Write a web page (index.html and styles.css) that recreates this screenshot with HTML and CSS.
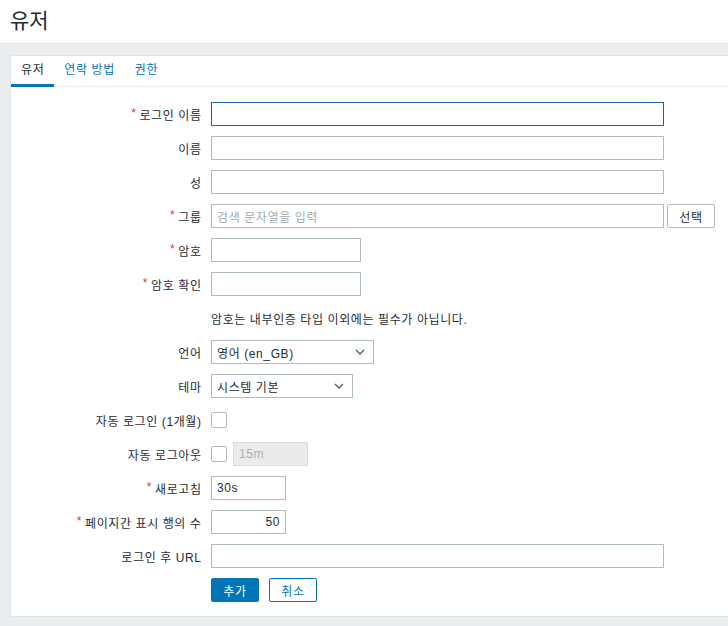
FILE: index.html
```html
<!DOCTYPE html>
<html lang="ko">
<head>
<meta charset="utf-8">
<title>유저</title>
<link rel="stylesheet" href="styles.css">
</head>
<body>
<header class="page-header">
  <h1 class="page-title">유저</h1>
</header>
<main class="wrapper">
  <div class="card">
    <ul class="tabs">
      <li class="tab active">유저</li>
      <li class="tab">연락 방법</li>
      <li class="tab">권한</li>
    </ul>
    <form class="form">
      <label class="label req">로그인 이름</label>
      <div class="field"><input class="input wide focus" type="text"></div>

      <label class="label">이름</label>
      <div class="field"><input class="input wide" type="text"></div>

      <label class="label">성</label>
      <div class="field"><input class="input wide" type="text"></div>

      <label class="label req">그룹</label>
      <div class="field">
        <div class="input wide multiselect"><span class="placeholder">검색 문자열을 입력</span></div>
        <button type="button" class="btn btn-grey">선택</button>
      </div>

      <label class="label req">암호</label>
      <div class="field"><input class="input small" type="password"></div>

      <label class="label req">암호 확인</label>
      <div class="field"><input class="input small" type="password"></div>

      <span class="label"></span>
      <div class="field hint">암호는 내부인증 타입 이외에는 필수가 아닙니다.</div>

      <label class="label">언어</label>
      <div class="field">
        <div class="select lang"><span>영어 (en_GB)</span>
          <svg class="chev" width="10" height="6" viewBox="0 0 10 6"><path d="M1 1 L5 5 L9 1" fill="none" stroke="#4f5b62" stroke-width="1.3"/></svg>
        </div>
      </div>

      <label class="label">테마</label>
      <div class="field">
        <div class="select theme"><span>시스템 기본</span>
          <svg class="chev" width="10" height="6" viewBox="0 0 10 6"><path d="M1 1 L5 5 L9 1" fill="none" stroke="#4f5b62" stroke-width="1.3"/></svg>
        </div>
      </div>

      <label class="label">자동 로그인 (1개월)</label>
      <div class="field"><span class="checkbox"></span></div>

      <label class="label">자동 로그아웃</label>
      <div class="field gap6"><span class="checkbox"></span><input class="input tiny disabled" type="text" value="15m" disabled></div>

      <label class="label req">새로고침</label>
      <div class="field"><input class="input tiny" type="text" value="30s"></div>

      <label class="label req">페이지간 표시 행의 수</label>
      <div class="field"><input class="input tiny right" type="text" value="50"></div>

      <label class="label">로그인 후 URL</label>
      <div class="field"><input class="input wide" type="text"></div>

      <span class="label"></span>
      <div class="field gap10">
        <button type="button" class="btn btn-primary">추가</button>
        <button type="button" class="btn btn-alt">취소</button>
      </div>
    </form>
  </div>
</main>
</body>
</html>
```

FILE: styles.css
```css
* { box-sizing: border-box; }
html, body { margin: 0; padding: 0; }
body {
  background: #ebeef0;
  font-family: "Liberation Sans", Arial, "Noto Sans CJK KR", sans-serif;
  font-size: 12px;
  letter-spacing: 0.6px;
  color: #1f2c33;
  width: 728px;
  height: 626px;
  overflow: hidden;
}
.page-header {
  background: #ffffff;
  height: 44px;
  border-bottom: 1px solid #dfe4e7;
  padding: 0 10px;
  display: flex;
  align-items: center;
}
.page-title {
  margin: 0;
  font-size: 21px;
  font-weight: normal;
  line-height: 24px;
  letter-spacing: 0;
  color: #1f2c33;
  position: relative;
  top: -1px;
}
.wrapper {
  padding: 11px 0 0 10px;
}
.card {
  background: #ffffff;
  border: 1px solid #dfe4e7;
  border-right: none;
  height: 562px;
}
.tabs {
  list-style: none;
  margin: 0;
  padding: 0;
  display: flex;
  height: 31px;
  border-bottom: 1px solid #ebeef0;
}
.tab {
  padding: 0 10px;
  line-height: 29px;
  color: #0275b8;
  border-bottom: 3px solid transparent;
  height: 31px;
  margin-bottom: -1px;
}
.tab.active {
  color: #1f2c33;
  border-bottom-color: #0275b8;
}
.form {
  display: grid;
  grid-template-columns: 190px 1fr;
  column-gap: 10px;
  row-gap: 10px;
  grid-auto-rows: 24px;
  padding-top: 15px;
}
.label {
  display: flex;
  align-items: center;
  justify-content: flex-end;
  white-space: nowrap;
  margin-right: -0.6px;
}
.label.req::before {
  content: "*";
  color: #e0324a;
  margin-right: 3px;
  position: relative;
  top: -1px;
}
.field {
  display: flex;
  align-items: center;
}
.gap6 { gap: 6px; }
.gap10 { gap: 10px; }
.input {
  height: 24px;
  border: 1px solid #acbbc2;
  border-radius: 0;
  background: #ffffff;
  font-family: inherit;
  font-size: 12px;
  letter-spacing: 0.6px;
  color: #1f2c33;
  padding: 0 5px;
  margin: 0;
  outline: none;
}
.input.wide { width: 453px; }
.input.small { width: 150px; }
.input.tiny { width: 75px; }
.input.right { text-align: right; }
.input.focus { border-color: #1a67a0; }
.input.disabled {
  background: #ebebeb;
  border-color: #dadcdd;
  color: #a8b0b5;
}
.multiselect {
  display: flex;
  align-items: center;
  padding-left: 5px;
}
.placeholder { color: #a3acb1; }
.btn {
  height: 24px;
  padding: 0;
  border-radius: 2px;
  font-family: inherit;
  font-size: 12px;
  letter-spacing: 0.6px;
  margin: 0;
  cursor: pointer;
}
.btn-grey {
  margin-left: 3px;
  width: 48px;
  background: #ffffff;
  border: 1px solid #acbbc2;
  color: #1f2c33;
}
.btn-primary {
  width: 48px;
  background: #0275b8;
  border: 1px solid #0275b8;
  color: #ffffff;
}
.btn-alt {
  width: 48px;
  background: #ffffff;
  border: 1px solid #0275b8;
  color: #0275b8;
}
.hint { color: #1f2c33; }
.select {
  height: 24px;
  border: 1px solid #acbbc2;
  background: #ffffff;
  display: flex;
  align-items: center;
  justify-content: space-between;
  padding: 0 8px 0 5px;
  font-size: 12px;
}
.select.lang { width: 163px; }
.select.theme { width: 142px; }
.chev { display: block; }
.checkbox {
  width: 16px;
  height: 16px;
  border: 1px solid #acbbc2;
  border-radius: 2px;
  background: #ffffff;
  display: inline-block;
}
```
